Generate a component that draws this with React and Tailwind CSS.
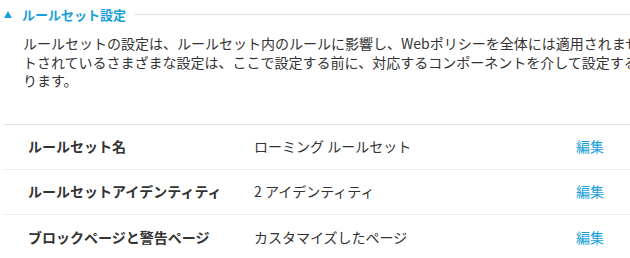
import React from 'react';

const rows = [
  { label: 'ルールセット名', value: 'ローミング ルールセット' },
  { label: 'ルールセットアイデンティティ', value: '2 アイデンティティ' },
  { label: 'ブロックページと警告ページ', value: 'カスタマイズしたページ' },
];

const App = () => {
  return (
    <div
      className="w-[630px] h-[258px] overflow-hidden bg-white text-[#333]"
      style={{ fontFamily: '"Noto Sans CJK JP", "Noto Sans", sans-serif' }}
    >
      {/* Section header */}
      <div className="flex items-center h-[28px] pl-[4px]">
        <span className="w-0 h-0 border-l-[4px] border-r-[4px] border-b-[7px] border-l-transparent border-r-transparent border-b-[#1a9fd9]" />
        <span className="ml-[10px] text-[13px] font-bold text-[#1a9fd9] leading-none">ルールセット設定</span>
        <div className="flex-1 ml-[9px] border-t border-[#dddddd]" />
      </div>

      {/* Description */}
      <div className="pl-[23px] pt-[6px] text-[14px] leading-[18.5px] whitespace-nowrap">
        <div>ルールセットの設定は、ルールセット内のルールに影響し、Webポリシーを全体には適用されません。ルールセットにリス</div>
        <div>トされているさまざまな設定は、ここで設定する前に、対応するコンポーネントを介して設定する必要があ</div>
        <div>ります。</div>
      </div>

      {/* Settings table */}
      <div className="ml-[4px] mt-[34px] border-t border-[#e2e2e2]">
        {rows.map((row, i) => (
          <div
            key={row.label}
            className={`flex items-center h-[45px] text-[14px] ${i < rows.length - 1 ? 'border-b border-[#efefef]' : ''}`}
          >
            <div className="w-[250px] pl-[24px] font-bold">{row.label}</div>
            <div className="w-[322px]">{row.value}</div>
            <a className="text-[#1a9fd9] cursor-pointer">編集</a>
          </div>
        ))}
      </div>
    </div>
  );
};

export default App;
